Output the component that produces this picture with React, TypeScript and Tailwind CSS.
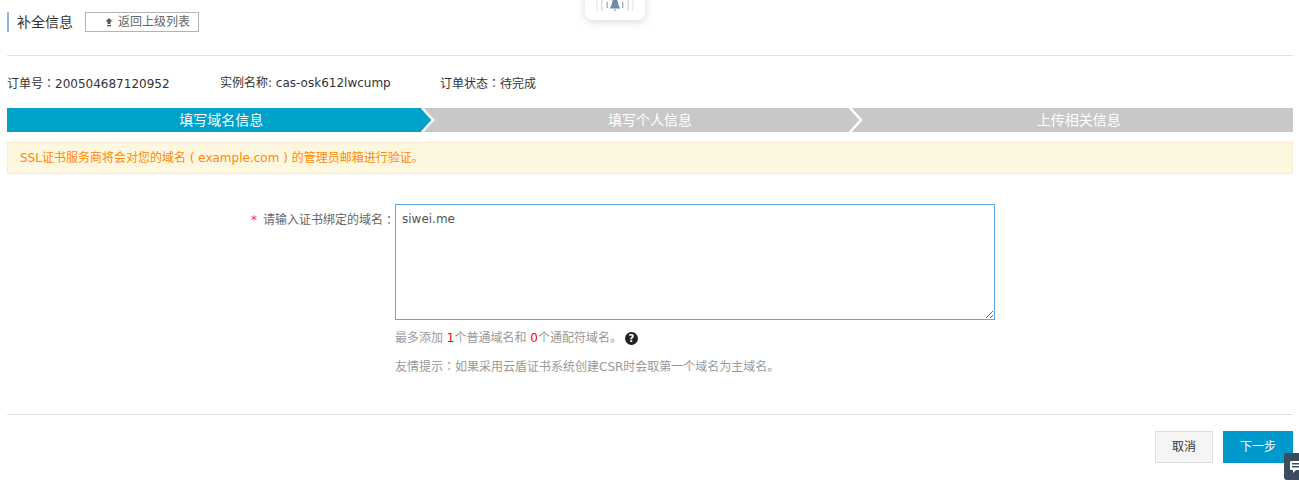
const font = "font-['DejaVu_Sans','Noto_Sans_CJK_SC',sans-serif]";

function Colon() {
  return <span className="font-['Noto_Sans_CJK_TC']">：</span>;
}

function Bell() {
  return (
    <div className="absolute left-[585px] top-[-40px] flex h-[60px] w-[60px] items-end justify-center rounded-lg bg-white pb-[8px] shadow-[0_2px_8px_rgba(0,0,0,0.15)]">
      <svg width="42" height="13" viewBox="0 0 42 13" fill="none">
        <path d="M21 0c2 0 3 2 3.200 5L26 9.500H16L17.800 5C18 2 19 0 21 0z" fill="#6f8cab" />
        <path d="M20 10.500h2v1h-2z" fill="#6f8cab" />
        <path d="M13.500 3c-.6 2-.6 4 0 6M28.500 3c.6 2 .6 4 0 6" stroke="#9aabbd" strokeWidth="1.300" />
        <path d="M8.500 0c-1.200 4-1.200 8 0 12M33.500 0c1.200 4 1.200 8 0 12" stroke="#c3ceda" strokeWidth="1" />
        <path d="M3.500 0c-1 3-1 8 .5 12M38.500 0c1 3 1 8-.5 12" stroke="#dbe2e9" strokeWidth="1" />
      </svg>
    </div>
  );
}

function Step({ label, active, last }: { label: string; active?: boolean; last?: boolean }) {
  return (
    <div className={`relative flex h-6 flex-1 items-center justify-center text-sm text-white ${active ? 'bg-[#00a2ca]' : 'bg-[#c8c8c8]'}`}>
      {label}
      {!last && (
        <svg className="absolute left-[100%] top-0 z-10 ml-[-15px]" width="16" height="24" viewBox="0 0 16 24">
          <path d="M2 0l11 12L2 24h14V0z" fill="#c8c8c8" />
          <path d="M1 0l11 12L1 24" fill="none" stroke="#fff" strokeWidth="2.500" />
        </svg>
      )}
    </div>
  );
}

export default function App() {
  return (
    <div className={`relative h-[487px] w-[1299px] overflow-hidden bg-white text-[12px] text-[#333] ${font}`}>
      <Bell />
      <div className="pl-[7px] pr-[6px]">
        <div className="flex h-[56px] items-start border-b border-[#e1e1e1] pt-[12px]">
          <h2 className="flex h-5 items-center border-l-2 border-[#88b7e0] pl-[8px] text-sm leading-5 font-normal text-[#333]">补全信息</h2>
          <button className="ml-3 flex h-5 w-[114px] items-center gap-[4px] border border-[#b3b3b3] bg-white pl-[18px] text-[12px] text-[#666]">
            <svg width="10" height="10" viewBox="0 0 10 10">
              <path d="M5 1l3.500 3.500H6.500V7h-3V4.500H1.500zM3 8h4v1.200H3z" fill="#555" />
            </svg>
            返回上级列表
          </button>
        </div>

        <div className="flex h-[52px] items-center pt-[2px] text-[#333]">
          <span className="w-[213px]">订单号<Colon />200504687120952</span>
          <span className="w-[220px]">实例名称: cas-osk612lwcump</span>
          <span>订单状态<Colon />待完成</span>
        </div>

        <div className="flex">
          <Step label="填写域名信息" active />
          <Step label="填写个人信息" />
          <Step label="上传相关信息" last />
        </div>

        <div className="mt-[10px] flex h-8 items-center border border-[#fbeacb] bg-[#fef7e0] pl-3 whitespace-pre text-[#ff8a00]">
          SSL证书服务商将会对您的域名 ( example.com ) 的管理员邮箱进行验证。
        </div>

        <div className="mt-[30px] flex">
          <label className="flex w-[388px] justify-end pt-[7px] text-[#666]">
            <span className="mr-[6px] text-[#ff2d55]">*</span>
            请输入证书绑定的域名<Colon />
          </label>
          <div className="flex flex-col">
            <textarea
              className="h-[116px] w-[600px] border border-[#62a8e0] px-[6px] py-[5px] text-[12px] text-[#555] outline-none"
              defaultValue="siwei.me"
            />
            <div className="mt-[9px] flex h-[18px] items-center text-[#999]">
              最多添加&nbsp;<span className="text-[#f00]">1</span>个普通域名和&nbsp;<span className="text-[#f00]">0</span>个通配符域名。
              <span className="ml-[3px] flex h-[13px] w-[13px] items-center justify-center rounded-full bg-[#222] text-[10px] font-bold text-white">?</span>
            </div>
            <p className="mt-[10px] text-[#999]">友情提示<Colon />如果采用云盾证书系统创建CSR时会取第一个域名为主域名。</p>
          </div>
        </div>

        <div className="mt-[38px] flex justify-end gap-[10px] border-t border-[#e1e1e1] pt-[16px]">
          <button className="h-8 w-[58px] border border-[#ddd] bg-[#f5f5f5] text-[12px] text-[#333]">取消</button>
          <button className="h-8 w-[70px] bg-[#0099cc] text-[12px] text-white">下一步</button>
        </div>
      </div>
      <div className="absolute left-[1284px] top-[453px] h-[27px] w-[20px] rounded-[3px] bg-[#3c4c5f]">
        <svg className="absolute left-[6px] top-[8px]" width="14" height="14" viewBox="0 0 14 14">
          <path d="M1 0h13v9H6l-3 3V9H1a1 1 0 0 1-1-1V1a1 1 0 0 1 1-1z" fill="#fff" />
          <path d="M2 2h12v1.500H2zM2 5h12v1.500H2z" fill="#3c4c5f" />
        </svg>
      </div>
    </div>
  );
}
